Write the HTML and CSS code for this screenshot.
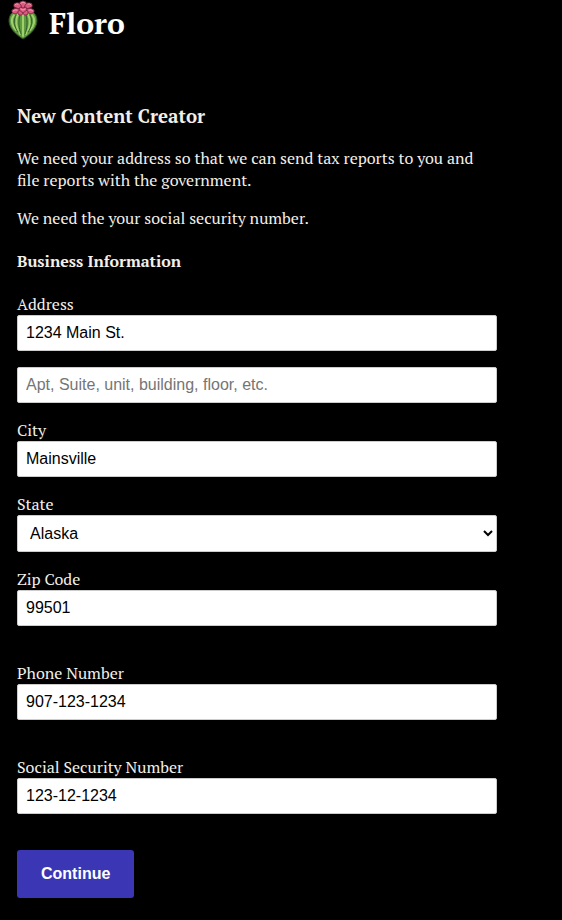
FILE: index.html
```html
<!DOCTYPE html>
<html lang="en">
<head>
<meta charset="utf-8">
<meta name="viewport" content="width=device-width, initial-scale=1">
<title>Floro</title>
<link rel="stylesheet" href="styles.css">
</head>
<body>
<header class="site-header">
  <svg class="logo" viewBox="0 0 30 40" aria-hidden="true">
    <path d="M15 39C10 36 1 29 1 21C1 14 5 11 10 11H20C25 11 29 14 29 21C29 29 20 36 15 39Z" fill="#5d9a40" stroke="#2c4a24" stroke-width="1"/>
    <g fill="none" stroke="#a0cf6c" stroke-width="2" stroke-linecap="round">
      <path d="M6 15C2 20 4 26 8 30"/>
      <path d="M10 14C7 20 8 28 12 34"/>
      <path d="M15 14V36"/>
      <path d="M20 14C23 20 22 28 18 34"/>
      <path d="M24 15C28 20 26 26 22 30"/>
    </g>
    <g fill="none" stroke="#35602b" stroke-width="1" stroke-linecap="round">
      <path d="M8 15C5 20 6 27 10 32"/>
      <path d="M12 15C10 21 11 29 13 34"/>
      <path d="M18 15C20 21 19 29 17 34"/>
      <path d="M22 15C25 20 24 27 20 32"/>
    </g>
    <g fill="#dc5c80" stroke="#7c2343" stroke-width="0.8" stroke-linejoin="round">
      <path d="M15 9L11 4Q12 1 15 1Q18 1 19 4Z"/>
      <path d="M14 10L6 7Q5 3 8 3Q11 2 13 5Z"/>
      <path d="M16 10L24 7Q25 3 22 3Q19 2 17 5Z"/>
      <path d="M13 11L7 14Q3 13 4 10Q7 7 12 9Z"/>
      <path d="M17 11L23 14Q27 13 26 10Q23 7 18 9Z"/>
      <path d="M15 9L10 11Q9 15 12 15Q14 16 15 13Z"/>
      <path d="M15 9L20 11Q21 15 18 15Q16 16 15 13Z"/>
      <path d="M15 13L11 10L12 7L15 8L18 7L19 10Z"/>
    </g>
    <g fill="none" stroke="#f59ab0" stroke-width="1" stroke-linecap="round">
      <path d="M13 3Q15 1 17 3"/>
      <path d="M7 5Q8 3 10 4"/>
      <path d="M23 5Q22 3 20 4"/>
      <path d="M5 11Q7 9 9 10"/>
      <path d="M25 11Q23 9 21 10"/>
      <path d="M13 9L15 10L17 9"/>
    </g>
  </svg>
  <h1 class="brand">Floro</h1>
</header>
<main class="page">
  <h3 class="page-title">New Content Creator</h3>
  <p class="note">We need your address so that we can send tax reports to you and file reports with the government.</p>
  <p class="note">We need the your social security number.</p>
  <h4 class="section-title">Business Information</h4>
  <form class="form">
    <div class="group">
      <div class="field">
        <label for="address">Address</label>
        <input class="control" id="address" type="text" value="1234 Main St.">
      </div>
      <input class="control" type="text" aria-label="Address line 2" placeholder="Apt, Suite, unit, building, floor, etc.">
      <div class="field">
        <label for="city">City</label>
        <input class="control" id="city" type="text" value="Mainsville">
      </div>
      <div class="field">
        <label for="state">State</label>
        <select class="control" id="state"><option>Alaska</option></select>
      </div>
      <div class="field">
        <label for="zip">Zip Code</label>
        <input class="control" id="zip" type="text" value="99501">
      </div>
    </div>
    <div class="field">
      <label for="phone">Phone Number</label>
      <input class="control" id="phone" type="tel" value="907-123-1234">
    </div>
    <div class="field">
      <label for="ssn">Social Security Number</label>
      <input class="control" id="ssn" type="text" value="123-12-1234">
    </div>
    <button class="submit" type="submit">Continue</button>
  </form>
</main>
</body>
</html>
```
FILE: styles.css
```css
* {
  box-sizing: border-box;
}

body {
  margin: 0;
  background: #000;
  color: #f2efea;
  font-family: "PT Serif", "Liberation Serif", serif;
  font-size: 16px;
  line-height: 22px;
}

.site-header {
  display: flex;
  align-items: center;
  gap: 11px;
  height: 48px;
  padding: 0 8px 8px;
}

.logo {
  width: 30px;
  height: 40px;
}

.brand {
  margin: 6px 0 0;
  color: #fff;
  font-size: 30px;
  line-height: 40px;
}

.page {
  max-width: 514px;
  padding: 56px 17px 20px;
}

.page-title {
  margin: 0 0 19px;
  line-height: 24px;
}

.note {
  margin: 0 0 16px;
}

.section-title {
  margin: 21px 0;
}

.form {
  display: flex;
  flex-direction: column;
  gap: 36px;
}

.group {
  display: flex;
  flex-direction: column;
  gap: 16px;
}

.field {
  display: flex;
  flex-direction: column;
}

.control {
  width: 100%;
  height: 36px;
  padding: 8px;
  border: 1px solid #ccc;
  border-radius: 2px;
  background-color: #fff;
  color: #000;
  font-family: "Liberation Sans", Arial, sans-serif;
  font-size: 16px;
}

select.control {
  height: 37px;
  padding: 8px 0 8px 8px;
}

.control::placeholder {
  color: #757575;
}

.submit {
  align-self: flex-start;
  height: 48px;
  padding: 0 24px;
  border: 0;
  border-radius: 3px;
  background: #3a36b4;
  color: #fff;
  font-family: "Liberation Sans", Arial, sans-serif;
  font-size: 16px;
  font-weight: bold;
}
```
